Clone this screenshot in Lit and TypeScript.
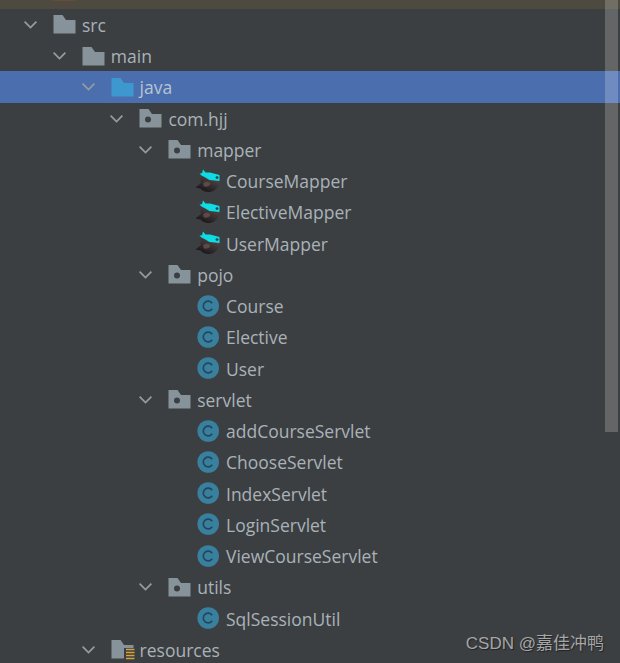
import { LitElement, html, css, svg } from "lit";
import { customElement } from "lit/decorators.js";

type Kind = "folder" | "source" | "package" | "mapper" | "class" | "resources";
interface Row { label: string; depth: number; kind: Kind; open?: boolean; selected?: boolean; }

const rows: Row[] = [
  { label: "src", depth: 0, kind: "folder", open: true },
  { label: "main", depth: 1, kind: "folder", open: true },
  { label: "java", depth: 2, kind: "source", open: true, selected: true },
  { label: "com.hjj", depth: 3, kind: "package", open: true },
  { label: "mapper", depth: 4, kind: "package", open: true },
  { label: "CourseMapper", depth: 5, kind: "mapper" },
  { label: "ElectiveMapper", depth: 5, kind: "mapper" },
  { label: "UserMapper", depth: 5, kind: "mapper" },
  { label: "pojo", depth: 4, kind: "package", open: true },
  { label: "Course", depth: 5, kind: "class" },
  { label: "Elective", depth: 5, kind: "class" },
  { label: "User", depth: 5, kind: "class" },
  { label: "servlet", depth: 4, kind: "package", open: true },
  { label: "addCourseServlet", depth: 5, kind: "class" },
  { label: "ChooseServlet", depth: 5, kind: "class" },
  { label: "IndexServlet", depth: 5, kind: "class" },
  { label: "LoginServlet", depth: 5, kind: "class" },
  { label: "ViewCourseServlet", depth: 5, kind: "class" },
  { label: "utils", depth: 4, kind: "package", open: true },
  { label: "SqlSessionUtil", depth: 5, kind: "class" },
  { label: "resources", depth: 2, kind: "resources", open: true },
];

const folderPath = "M0.5 0H9.5L13 5H22.5V18.5H0.5Z";

function icon(kind: Kind) {
  switch (kind) {
    case "folder":
      return svg`<path d=${folderPath} fill="#87939a"/>`;
    case "source":
      return svg`<path d=${folderPath} fill="#3d98cf"/>`;
    case "package":
      return svg`<path d=${folderPath} fill="#87939a"/><circle cx="9" cy="10.5" r="3" fill="#3c3f41"/>`;
    case "resources":
      return svg`<path d=${folderPath} fill="#87939a"/>
        <rect x="13" y="8" width="11" height="12" fill="#3c3f41"/>
        <path d="M15 9.5H23.5M15 12.5H23.5M15 15.5H23.5M15 18.5H23.5" stroke="#d5a13a" stroke-width="1.6"/>`;
    case "class":
      return svg`<circle cx="11.2" cy="9" r="10.8" fill="#39809f"/>
        <path d="M15.2 6.2A4.9 4.9 0 1 0 15.2 11.8" fill="none" stroke="#24465a" stroke-width="1.7"/>`;
    case "mapper":
      return svg`<defs><linearGradient id="bird" x1="0.8" y1="0" x2="0.2" y2="1">
          <stop offset="0" stop-color="#5f4e4e"/><stop offset="1" stop-color="#131316"/></linearGradient></defs>
        <path d="M5 3C10 1 18 1 21.5 5C24 10 21.5 17.5 15 19.5C10 21 6 19.5 3.5 16.5L-1.5 15.5L4 11C3 8 3.5 5 5 3Z" fill="url(#bird)"/>
        <path d="M6 11.5C8 9 12 9.5 13.5 11.5C13 14.5 9 15 7 14.5Z" fill="#5d4a48"/>
        <path d="M2.5 1.5L5 1.2L6 -2.5L8.5 0.5L13 0.5L22.5 3V9L12.5 8L7.5 5L4.5 3.5Z" fill="#0fdde3"/>
        <circle cx="20" cy="5.6" r="1.4" fill="#114c55"/>`;
  }
}

@customElement("app-root")
export class AppRoot extends LitElement {
  static styles = css`
    :host {
      display: block;
      position: relative;
      width: 620px;
      height: 663px;
      overflow: hidden;
      background: #3c3f41;
      font-family: "Open Sans", "Noto Sans", sans-serif;
    }
    .strip { height: 8.8px; background: #4e4a40; }
    .tab { display: block; margin-left: 53px; width: 22px; height: 1px; background: #6b4a3a; }
    .row {
      height: 31.25px;
      box-sizing: border-box;
      padding-top: 0.8px;
      display: flex;
      align-items: center;
      color: #a9b2b9;
      font-size: 17.5px;
      white-space: nowrap;
    }
    .row.selected { background: #4b6eaf; color: #b9c4d2; }
    .chev { width: 13px; height: 8px; flex: none; margin-right: 16px; }
    .chev path { fill: none; stroke: #989b9e; stroke-width: 1.7; }
    .ico { width: 23px; height: 19px; flex: none; margin-right: 6px; overflow: visible; }
    .scroll {
      position: absolute;
      left: 605px;
      top: 0;
      width: 13px;
      height: 432px;
      background: rgba(255, 255, 255, 0.2);
    }
    .mark {
      position: absolute;
      right: 16px;
      bottom: 9px;
      font: 17px "Liberation Sans", "Noto Sans CJK SC", sans-serif;
      color: #a4a6a7;
      text-shadow: 1px 1px 1px #222;
    }
  `;

  render() {
    return html`
      <div class="strip"><span class="tab"></span></div>
      <div class="tree">
        ${rows.map(
          (r) => html`
            <div class="row ${r.selected ? "selected" : ""}" style="padding-left:${24 + 28.8 * r.depth}px">
              <svg class="chev" viewBox="0 0 13 8">
                ${r.open ? svg`<path d="M0.6 0.6L6.5 6.6L12.4 0.6"/>` : ""}
              </svg>
              <svg class="ico" viewBox="0 0 23 19">${icon(r.kind)}</svg>
              <span class="label">${r.label}</span>
            </div>
          `
        )}
      </div>
      <div class="scroll"></div>
      <div class="mark">CSDN @嘉佳冲鸭</div>
    `;
  }
}
